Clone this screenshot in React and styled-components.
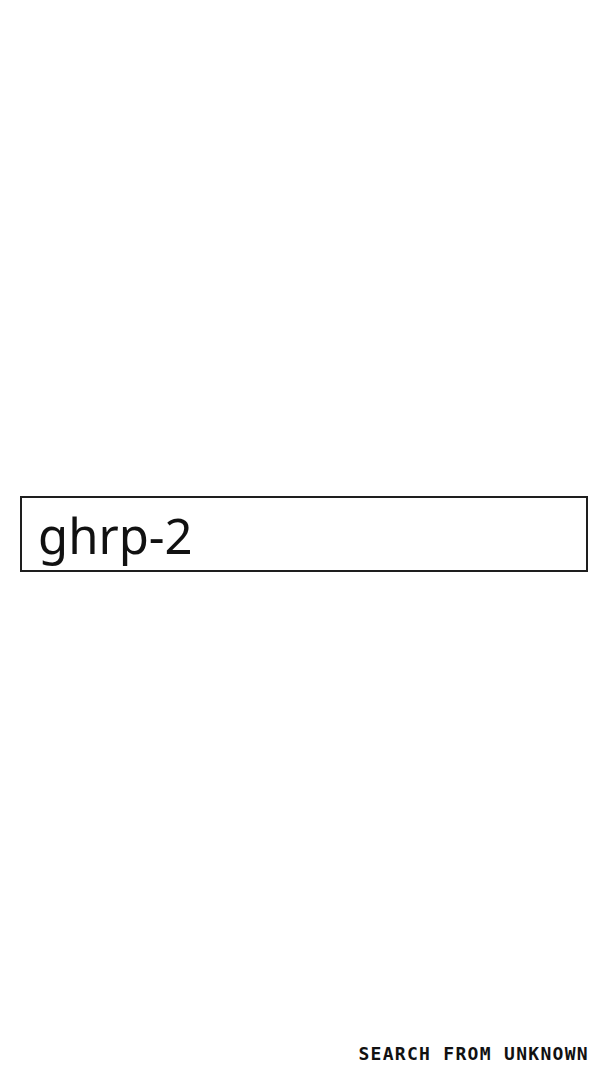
import React from 'react';
import styled, { createGlobalStyle } from 'styled-components';

const GlobalStyle = createGlobalStyle`
  html, body {
    margin: 0;
    padding: 0;
    background: #ffffff;
  }
`;

const Page = styled.div`
  height: 100vh;
  box-sizing: border-box;
  display: grid;
  grid-template-rows: 1fr auto 1fr;
  padding: 0 20px 12px;
`;

const SearchInput = styled.input`
  display: block;
  width: 100%;
  height: 76px;
  box-sizing: border-box;
  border: 2px solid #1e1e1e;
  border-radius: 0;
  padding: 2px 16px 0;
  font-family: 'Noto Sans', sans-serif;
  font-size: 49px;
  color: #111;
  background: #fff;
  outline: none;
`;

const Footer = styled.footer`
  align-self: end;
  justify-self: end;
  font-family: 'DejaVu Sans Mono', monospace;
  font-weight: 700;
  font-size: 18px;
  line-height: 22px;
  color: #111;
  letter-spacing: 1.3px;
  margin: 0 -1px 3px 0;
`;

const App = () => {
  return (
    <>
      <GlobalStyle />
      <Page>
        <div />
        <SearchInput defaultValue='ghrp-2' />
        <Footer>SEARCH FROM UNKNOWN</Footer>
      </Page>
    </>
  );
};

export default App;
